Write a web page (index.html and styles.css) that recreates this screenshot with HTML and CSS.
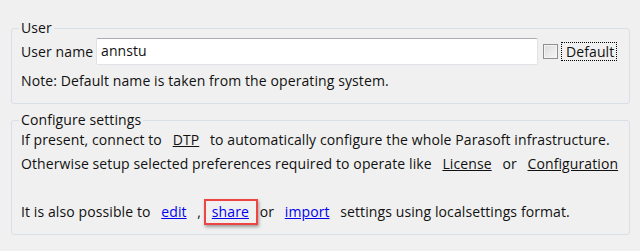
FILE: index.html
```html
<!DOCTYPE html>
<html>
<head>
<meta charset="utf-8">
<link rel="stylesheet" href="styles.css">
</head>
<body>
<fieldset class="group group-user">
  <legend>User</legend>
  <div class="user-row">
    <label class="label">User name</label>
    <div class="input">annstu</div>
    <div class="check">
      <span class="box"></span>
      <span class="check-label">Default</span>
    </div>
  </div>
  <div class="line">Note: Default name is taken from the operating system.</div>
</fieldset>
<fieldset class="group group-config">
  <legend>Configure settings</legend>
  <div class="line">If present, connect to <a class="plain">DTP</a> to automatically configure the whole Parasoft infrastructure.</div>
  <div class="line">Otherwise setup selected preferences required to operate like <a class="plain">License</a> or <a class="plain">Configuration</a></div>
  <div class="line empty"></div>
  <div class="line">It is also possible to <a class="web">edit</a> , <a class="web marked">share</a> or <a class="web">import</a> settings using localsettings format.</div>
</fieldset>
</body>
</html>
```
FILE: styles.css
```css
html, body {
  margin: 0;
  padding: 0;
}
body {
  background: #f0f0f0;
  font-family: "Open Sans", "Noto Sans", sans-serif;
  font-size: 14px;
  letter-spacing: 0.1px;
  color: #111;
  width: 640px;
  height: 251px;
  overflow: hidden;
  padding-top: 20px;
  box-sizing: border-box;
}
.group {
  margin: 0 10px 0 11px;
  padding: 0 9px 10px 9px;
  border: 1px solid #d9dfe6;
  border-radius: 3px;
  min-width: 0;
}
.group legend {
  padding: 0 2px;
  margin-left: -2px;
  line-height: 16px;
}
.group-config {
  margin-top: 8px;
}
.user-row {
  display: flex;
  align-items: center;
  margin-top: 2px;
  height: 27px;
}
.label {
  width: 75px;
}
.input {
  width: 436px;
  height: 25px;
  background: #fff;
  border: 1px solid #dfe3e8;
  border-top-color: #abadb3;
  border-radius: 2px;
  padding-left: 4px;
  line-height: 24px;
  box-sizing: content-box;
}
.check {
  display: flex;
  align-items: center;
  margin-left: 5px;
}
.box {
  width: 13px;
  height: 13px;
  border: 1px solid #8f8f8f;
  background: linear-gradient(135deg, #dcdcdc, #f6f6f6);
  box-shadow: inset 0 0 0 1px #f4f4f4;
}
.check-label {
  margin-left: 3px;
  padding: 0 2px 0 4px;
  border: 1px dotted #000;
  line-height: 17px;
}
.line {
  line-height: 24px;
  white-space: nowrap;
}
.group-user .line {
  margin-top: 4px;
}
.empty {
  height: 24px;
}
a {
  text-decoration: underline;
  margin: 0 7px;
}
.plain {
  color: #111;
}
.web {
  color: #0000ee;
}
.marked {
  position: relative;
}
.marked::after {
  content: "";
  position: absolute;
  left: -8px;
  right: -9px;
  top: -3px;
  bottom: -4px;
  border: 2px solid #ee4444;
  box-shadow: 1px 2px 3px rgba(0, 0, 0, 0.35);
}
```
